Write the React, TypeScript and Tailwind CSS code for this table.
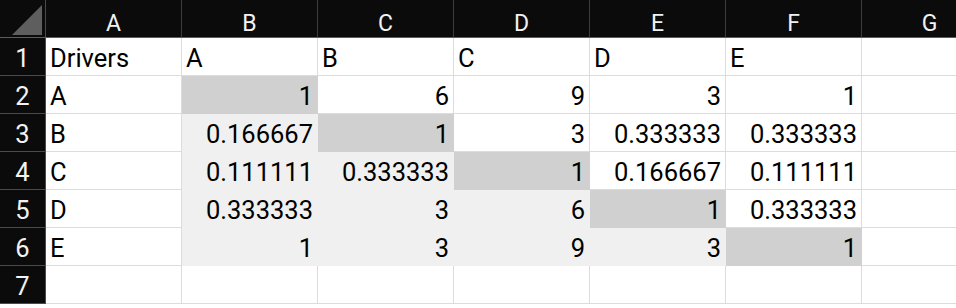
const COLS = ['A', 'B', 'C', 'D', 'E', 'F', 'G'];

const DATA: string[][] = [
  ['Drivers', 'A', 'B', 'C', 'D', 'E'],
  ['A', '1', '6', '9', '3', '1'],
  ['B', '0.166667', '1', '3', '0.333333', '0.333333'],
  ['C', '0.111111', '0.333333', '1', '0.166667', '0.111111'],
  ['D', '0.333333', '3', '6', '1', '0.333333'],
  ['E', '1', '3', '9', '3', '1'],
  ['', '', '', '', '', ''],
];

function cellClass(r: number, c: number) {
  // c: 0 = column A, 1..5 = B..F
  if (r >= 1 && r <= 5 && c >= 1 && c <= 5) {
    if (c === r) return 'bg-[#d0d0d0] border-[#d0d0d0]';
    if (c < r) return 'bg-[#f0f0f0] border-[#f0f0f0]';
  }
  return 'bg-white border-[#dcdcdc]';
}

export default function App() {
  return (
    <div
      className="w-[956px] h-[308px] overflow-hidden bg-white text-[25.5px] leading-none text-black"
      style={{ fontFamily: 'Roboto, "Liberation Sans", sans-serif' }}
    >
      {/* column header row */}
      <div className="flex h-[38px] bg-[#0b0b0b] border-b border-[#5c5c5c]">
        <div className="relative w-[46px] shrink-0 border-r border-[#4a4a4a]">
          <svg className="absolute left-0 top-0" width="45" height="37" viewBox="0 0 45 37">
            <polygon points="12,35 42,35 42,5" fill="#5e5e5e" />
          </svg>
        </div>
        {COLS.map((col) => (
          <div
            key={col}
            className="w-[136px] shrink-0 flex items-end justify-center pb-[2px] border-r border-[#3c3c3c] text-[23px] text-[#f2f2f2]"
          >
            {col}
          </div>
        ))}
      </div>

      {DATA.map((row, r) => (
        <div key={r} className="flex h-[38px]">
          <div className="w-[46px] shrink-0 flex items-end justify-center pb-[4px] bg-[#0b0b0b] border-r border-b border-[#4a4a4a] text-[#f2f2f2]">
            {r + 1}
          </div>
          {row.map((val, c) => {
            const numeric = r >= 1 && c >= 1;
            return (
              <div
                key={c}
                className={`w-[136px] shrink-0 flex items-end border-r border-b pb-[4px] px-[4px] ${cellClass(r, c)} ${
                  numeric ? 'justify-end' : 'justify-start'
                }`}
              >
                {val}
              </div>
            );
          })}
          <div className="w-[136px] shrink-0 border-r border-b border-[#dcdcdc] bg-white" />
        </div>
      ))}
    </div>
  );
}
